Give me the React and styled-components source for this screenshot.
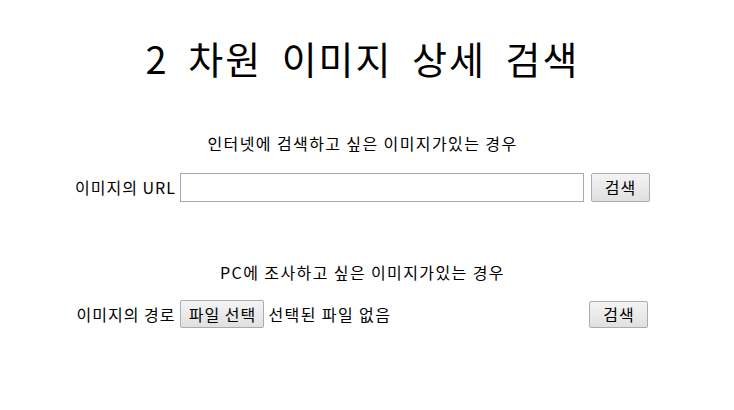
import React from "react";
import styled, { createGlobalStyle } from "styled-components";

const GlobalStyle = createGlobalStyle`
  html, body {
    margin: 0;
    padding: 0;
    background: #fff;
  }
  body {
    font-family: "Noto Sans CJK KR", "Noto Sans", sans-serif;
    color: #000;
  }
`;

const Page = styled.main`
  display: flex;
  flex-direction: column;
  align-items: center;
  padding: 39px 9px 0 0;
`;

const Title = styled.h1`
  margin: 0;
  font-size: 38px;
  line-height: 38px;
  font-weight: 400;
  letter-spacing: 2px;
  word-spacing: 9px;
`;

const Section = styled.section`
  display: flex;
  flex-direction: column;
  align-items: center;
  gap: ${(p) => p.$gap}px;
  margin-top: ${(p) => p.$top}px;
`;

const Prompt = styled.p`
  margin: 0;
  font-size: 16px;
  line-height: 20px;
  letter-spacing: 1.4px;
`;

const Row = styled.div`
  display: flex;
  align-items: center;
  height: 30px;
`;

const Label = styled.label`
  font-size: 16px;
  line-height: 20px;
  letter-spacing: 1px;
  white-space: nowrap;
`;

const UrlInput = styled.input`
  box-sizing: border-box;
  width: 404px;
  height: 29px;
  margin: 0 7px 0 4px;
  padding: 2px 4px;
  border: 1px solid #a9a9a9;
  background: #fff;
  font: inherit;
  font-size: 15px;
  outline: none;
`;

const Button = styled.button`
  box-sizing: border-box;
  width: ${(p) => p.$width || 59}px;
  height: ${(p) => p.$height || 29}px;
  padding: 0;
  border: 1px solid #acacac;
  border-radius: 2px;
  background: linear-gradient(#f4f4f4, #e0e0e0);
  font-family: "Noto Sans CJK KR", sans-serif;
  font-size: 16px;
  line-height: 1;
  letter-spacing: 1px;
  color: #000;
  cursor: pointer;
`;

const FileCell = styled.div`
  display: flex;
  align-items: center;
  gap: 4px;
  width: 402px;
  margin: 0 7px 0 5px;
`;

const HiddenFile = styled.input`
  display: none;
`;

const FileText = styled.span`
  font-size: 16px;
  line-height: 20px;
  letter-spacing: 1.4px;
  white-space: nowrap;
`;

export default function App() {
  const fileRef = React.useRef(null);
  const [fileName, setFileName] = React.useState("");

  return (
    <>
      <GlobalStyle />
      <Page>
        <Title>2 차원 이미지 상세 검색</Title>

        <Section $top={56} $gap={19}>
          <Prompt>인터넷에 검색하고 싶은 이미지가있는 경우</Prompt>
          <Row>
            <Label htmlFor="url">이미지의 URL</Label>
            <UrlInput id="url" type="text" />
            <Button type="button">검색</Button>
          </Row>
        </Section>

        <Section $top={60} $gap={17}>
          <Prompt>PC에 조사하고 싶은 이미지가있는 경우</Prompt>
          <Row>
            <Label>이미지의 경로</Label>
            <FileCell>
              <Button
                type="button"
                $width={84}
                $height={28}
                onClick={() => fileRef.current && fileRef.current.click()}
              >
                파일 선택
              </Button>
              <FileText>{fileName || "선택된 파일 없음"}</FileText>
              <HiddenFile
                ref={fileRef}
                type="file"
                onChange={(e) =>
                  setFileName(e.target.files[0] ? e.target.files[0].name : "")
                }
              />
            </FileCell>
            <Button type="button" $height={27}>
              검색
            </Button>
          </Row>
        </Section>
      </Page>
    </>
  );
}
